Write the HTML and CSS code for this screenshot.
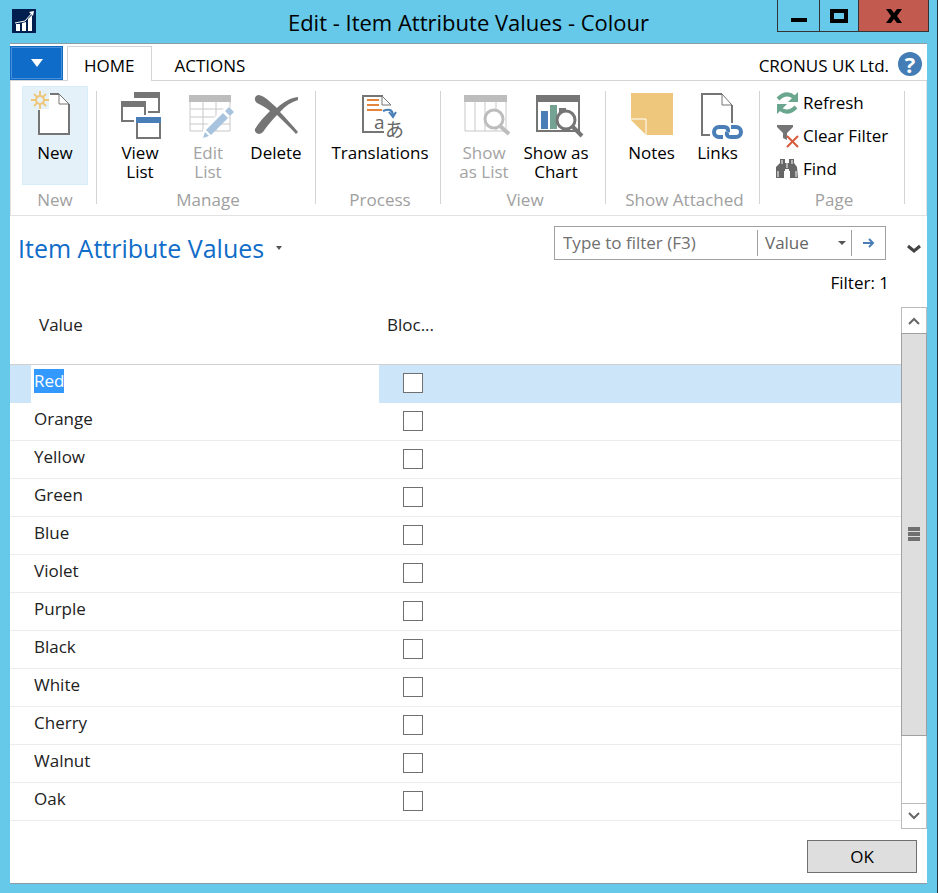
FILE: index.html
```html
<!DOCTYPE html>
<html lang="en">
<head>
<meta charset="utf-8">
<title>Edit - Item Attribute Values - Colour</title>
<link rel="stylesheet" href="styles.css">
</head>
<body>
<div class="window">
  <header class="titlebar">
    <svg class="app-icon" width="24" height="24" viewBox="0 0 24 24"><path fill="#001f4e" d="M0 0h24v24H0z"/><path fill="#fff" d="M4 15h4v7H4zM10 14l4-1v9h-4zM16 10l4-4v16h-4z"/><path d="M3 14l5-1 5-1 7-8" fill="none" stroke="#fff"/><path fill="#fff" d="M17 3l5-1-1 5z"/></svg>
    <h1 class="window-title">Edit - Item Attribute Values - Colour</h1>
    <div class="window-buttons">
      <button class="win-btn" aria-label="Minimize"><svg width="16" height="16"><path d="M0 10h16v4H0z"/></svg></button>
      <button class="win-btn" aria-label="Maximize"><svg width="18" height="14"><path d="M2 2h14v10H2z" fill="none" stroke="#000" stroke-width="4"/></svg></button>
      <button class="win-btn close" aria-label="Close"><svg width="16" height="14" viewBox="0 0 16 14"><path d="M0 0h5l3 4 3-4h5l-5 7 5 7h-5l-3-4-3 4H0l5-7z"/></svg></button>
    </div>
  </header>
  <main class="client">
    <nav class="tabs">
      <button class="app-menu" aria-label="Application menu"><svg width="12" height="8"><path fill="#fff" d="M0 0h12L6 8z"/></svg></button>
      <a class="tab active" href="#home">HOME</a>
      <a class="tab" href="#actions">ACTIONS</a>
      <span class="company">CRONUS UK Ltd.</span>
      <button class="help" aria-label="Help">?</button>
    </nav>
    <div class="ribbon" id="home">
      <section class="group g-new">
        <div class="tools">
          <button class="tool highlighted"><svg width="48" height="48" viewBox="0 0 48 48"><path d="M8 3h20l10 10v30H8z" fill="#fff"/><path d="M0 0h18v18H0z" fill="#e4f1f9"/><path d="M8 19v24h30V13M19 3h9" fill="none" stroke="#757575" stroke-width="2"/><path d="M28 3v10h10M28 3l10 10" fill="none" stroke="#757575"/><path d="M9 0v5M9 13v5M0 9h5M13 9h5M3 3l4 4M11 11l4 4M15 3l-4 4M7 11l-4 4" stroke="#eec77c" stroke-width="2"/><circle cx="9" cy="9" r="4" fill="none" stroke="#eec77c" stroke-width="2"/></svg><span>New</span></button>
        </div>
        <h2>New</h2>
      </section>
      <section class="group g-manage">
        <div class="tools">
          <button class="tool"><svg width="48" height="48" viewBox="0 0 48 48"><g fill="#757575"><path d="M18 1h26v6H18zM42 7h2v15H32v-2h10zM5 10h25v6H5zM5 16h2v13h11v2H5zM28 16h2v8h-2z"/></g><path d="M21 27h23v20H21z" fill="#fff" stroke="#757575" stroke-width="2"/><path fill="#4a7eb6" d="M20 26h25v6H20z"/></svg><span>View<br>List</span></button>
          <button class="tool" disabled><svg width="48" height="48" viewBox="0 0 48 48"><path d="M5 4h42v7H5z" fill="#bdbdbd"/><path d="M6 11v29h40V11M6 18h40M6 26h40M6 33h40M19 11v29M32 11v29" fill="none" stroke="#c8c8c8"/><path d="M17 47l3-10 20-20 8-1v7L27 43z" fill="#fff"/><path d="M19 47l2-6 4 4zM22 39l17-17 5 5-17 17zM41 20l4-4 5 5-4 4z" fill="#a8c3de"/></svg><span>Edit<br>List</span></button>
          <button class="tool"><svg width="48" height="48" viewBox="0 0 48 48"><path d="M7 4c6 1 12 8 18 13C31 11 38 7 46 6v3c-7 2-13 6-18 12 6 6 12 13 18 20l-2 2C38 36 31 30 25 24 20 29 15 35 11 41c-4 4-9 1-8-3C7 31 13 25 18 20 13 16 9 14 5 12 1 9 3 4 7 4z" fill="#757575"/></svg><span>Delete</span></button>
        </div>
        <h2>Manage</h2>
      </section>
      <section class="group g-process">
        <div class="tools">
          <button class="tool"><svg width="48" height="48" viewBox="0 0 48 48"><path d="M28 41H7V5h20" fill="none" stroke="#757575" stroke-width="2"/><path d="M26 5v9h9M26 5l9 9" fill="none" stroke="#757575"/><path d="M11 9h12M11 14h12M11 19h15" stroke="#e5843b" stroke-width="2"/><path d="M27 20q9-4 10 4M33 21l4 5 3-5" fill="none" stroke="#4a7eb6" stroke-width="2"/><text x="18" y="38" class="glyph latin">a</text><text x="29" y="46" class="glyph kana">あ</text></svg><span>Translations</span></button>
        </div>
        <h2>Process</h2>
      </section>
      <section class="group g-view">
        <div class="tools">
          <button class="tool" disabled><svg width="48" height="48" viewBox="0 0 48 48"><path d="M4 4h43v7H4z" fill="#bdbdbd"/><path d="M5 11v29h41V11M15 11v29M25 11v29M36 11v29" fill="none" stroke="#c8c8c8"/><circle cx="34" cy="28" r="9" fill="#fff" stroke="#bdbdbd" stroke-width="3"/><path d="M40 35l9 8" stroke="#bdbdbd" stroke-width="4"/></svg><span>Show<br>as List</span></button>
          <button class="tool"><svg width="48" height="48" viewBox="0 0 48 48"><path d="M4 4h44v7H4z" fill="#757575"/><path d="M5 11v29h42V11" fill="none" stroke="#757575" stroke-width="2"/><path fill="#4a7eb6" d="M9 20h7v18H9z"/><path fill="#74a393" d="M18 14h7v24h-7z"/><path fill="#757575" d="M27 17h7v6h-7z"/><circle cx="34" cy="29" r="9" fill="#fff" stroke="#757575" stroke-width="3"/><path d="M41 36l9 9" stroke="#757575" stroke-width="4"/></svg><span>Show as<br>Chart</span></button>
        </div>
        <h2>View</h2>
      </section>
      <section class="group g-attached">
        <div class="tools">
          <button class="tool"><svg width="48" height="48" viewBox="0 0 48 48"><path d="M3 2h42v42H18L3 29z" fill="#eec77c"/><path d="M3 28h15v16" fill="none" stroke="#fff"/></svg><span>Notes</span></button>
          <button class="tool"><svg width="48" height="48" viewBox="0 0 48 48"><path d="M16 44H8V3h20M38 14v18" fill="none" stroke="#757575" stroke-width="2"/><path d="M28 3v11h10M28 3l10 11" fill="none" stroke="#757575"/><g fill="none" stroke="#4a7eb6" stroke-width="4"><path d="M29 46h-4a5 5 0 0 1 0-10h5q5 0 4 5"/><path d="M37 36h5a5 5 0 0 1 0 10h-5q-5 0-4-5"/></g></svg><span>Links</span></button>
        </div>
        <h2>Show Attached</h2>
      </section>
      <section class="group g-page">
        <div class="list-tools">
          <button class="row-tool"><svg width="24" height="24" viewBox="0 0 24 24"><path d="M3 8q8-8 16-2M21 16q-8 8-16 2" fill="none" stroke="#6ba68e" stroke-width="4"/><path d="M23 1v10H13zM2 23V13h10z" fill="#6ba68e"/></svg>Refresh</button>
          <button class="row-tool"><svg width="24" height="24" viewBox="0 0 24 24"><path d="M2 1h16v2l-6 6v7l-4-2V9L2 3z" fill="#757575"/><path d="M12 12l11 11M23 12L12 23" stroke="#d65a3c" stroke-width="2"/></svg>Clear Filter</button>
          <button class="row-tool"><svg width="24" height="24" viewBox="0 0 24 24"><path d="M5 2h5v4h4V2h5v4l3 4 1 11h-8v-7h-1v-2h-4v2H9v7H1V10l4-4z" fill="#666"/><path d="M7 3v4M17 3v4M3 14v6M21 14v6M12 6v5" stroke="#fff"/></svg>Find</button>
        </div>
        <h2>Page</h2>
      </section>
    </div>
    <div class="page-head">
      <button class="page-title">Item Attribute Values <svg width="6" height="4"><path fill="#555" d="M0 0h6L3 4z"/></svg></button>
      <form class="filter">
        <input type="text" aria-label="Type to filter" placeholder="Type to filter (F3)">
        <div class="column-pick"><select aria-label="Filter column"><option>Value</option></select></div>
        <button type="button" aria-label="Apply filter"><svg width="12" height="10"><path d="M0 5h10M6 1l4 4-4 4" fill="none" stroke="#4a7eb6" stroke-width="2"/></svg></button>
      </form>
      <button class="expand" aria-label="Expand filter"><svg width="16" height="10"><path d="M2 2l6 5 6-5" fill="none" stroke="#444" stroke-width="3"/></svg></button>
    </div>
    <p class="filter-status">Filter: 1</p>
    <div class="list">
      <table>
        <colgroup><col class="c-mark"><col class="c-value"><col class="c-blocked"><col></colgroup>
        <thead><tr><th></th><th class="value-head">Value</th><th class="blocked-head">Bloc...</th><th></th></tr></thead>
        <tbody>
          <tr class="selected"><td></td><td class="value"><span class="sel-text">Red</span></td><td class="check"><input type="checkbox" aria-label="Red blocked"></td><td></td></tr>
          <tr><td></td><td class="value">Orange</td><td class="check"><input type="checkbox" aria-label="Orange blocked"></td><td></td></tr>
          <tr><td></td><td class="value">Yellow</td><td class="check"><input type="checkbox" aria-label="Yellow blocked"></td><td></td></tr>
          <tr><td></td><td class="value">Green</td><td class="check"><input type="checkbox" aria-label="Green blocked"></td><td></td></tr>
          <tr><td></td><td class="value">Blue</td><td class="check"><input type="checkbox" aria-label="Blue blocked"></td><td></td></tr>
          <tr><td></td><td class="value">Violet</td><td class="check"><input type="checkbox" aria-label="Violet blocked"></td><td></td></tr>
          <tr><td></td><td class="value">Purple</td><td class="check"><input type="checkbox" aria-label="Purple blocked"></td><td></td></tr>
          <tr><td></td><td class="value">Black</td><td class="check"><input type="checkbox" aria-label="Black blocked"></td><td></td></tr>
          <tr><td></td><td class="value">White</td><td class="check"><input type="checkbox" aria-label="White blocked"></td><td></td></tr>
          <tr><td></td><td class="value">Cherry</td><td class="check"><input type="checkbox" aria-label="Cherry blocked"></td><td></td></tr>
          <tr><td></td><td class="value">Walnut</td><td class="check"><input type="checkbox" aria-label="Walnut blocked"></td><td></td></tr>
          <tr><td></td><td class="value">Oak</td><td class="check"><input type="checkbox" aria-label="Oak blocked"></td><td></td></tr>
        </tbody>
      </table>
      <div class="scrollbar">
        <button class="arrow up" aria-label="Scroll up"><svg width="12" height="8"><path d="M1 7l5-5 5 5" fill="none" stroke="#666" stroke-width="2"/></svg></button>
        <div class="thumb"><svg width="12" height="14"><path fill="#707070" d="M0 0h12v4H0zM0 5h12v4H0zM0 10h12v4H0z"/></svg></div>
        <div class="track"></div>
        <button class="arrow down" aria-label="Scroll down"><svg width="12" height="8"><path d="M1 1l5 5 5-5" fill="none" stroke="#666" stroke-width="2"/></svg></button>
      </div>
    </div>
    <footer><button class="ok">OK</button></footer>
  </main>
</div>
</body>
</html>
```
FILE: styles.css
```css
* { box-sizing: border-box; }
body {
  margin: 0;
  font: 17px/20px "Open Sans", "Noto Sans", sans-serif;
  color: #000;
}
button, input, select { font: inherit; color: inherit; margin: 0; padding: 0; border: 0; background: none; border-radius: 0; }
svg { display: block; flex: none; overflow: visible; }
h1, h2, p { margin: 0; font-weight: 400; }
.window {
  min-height: 100vh;
  display: flex;
  flex-direction: column;
  padding: 0 10px;
  background: #66c9ea;
  border-right: 1px solid #22343c;
}
.titlebar { display: flex; align-items: flex-start; height: 43px; }
.app-icon { margin: 9px 0 0 2px; }
.window-title { flex: 1; padding-left: 124px; text-align: center; font-size: 22px; line-height: 44px; }
.window-buttons { display: flex; height: 32px; margin-right: -2px; border: 1px solid #333; border-top: 0; }
.win-btn { width: 42px; display: grid; place-items: center; border-right: 1px solid #333; }
.win-btn + .win-btn { width: 39px; }
.window-buttons .close { width: 69px; background: #c25a50; border-right: 0; }
.client {
  flex: 1;
  display: flex;
  flex-direction: column;
  margin-bottom: 9px;
  background: #fff;
  border-top: 1px solid #8a9da6;
  border-bottom: 1px solid #8a9da6;
}
.tabs { display: flex; height: 37px; padding-top: 2px; border-bottom: 1px solid #d5d5d5; }
.app-menu { width: 53px; height: 34px; margin-right: 4px; display: grid; place-items: center; background: #0f6cc8; border: 1px solid #0f6cc8; outline: 1px solid #4a8fd6; outline-offset: -2px; }
.tab { padding: 0 16px; line-height: 38px; color: #000; text-decoration: none; border: 1px solid transparent; border-bottom: 0; }
.tab.active { height: 35px; background: #fff; border-color: #d5d5d5; }
.tab + .tab { padding-left: 22px; }
.company { margin-left: auto; line-height: 40px; }
.help { width: 24px; height: 24px; margin: 6px 5px 0 9px; border-radius: 50%; background: #447cb5; color: #fff; font-size: 22px; font-weight: 700; line-height: 24px; }
.ribbon { display: flex; height: 135px; padding: 5px 0 11px; border: 1px solid #e2e2e2; border-top: 0; }
.group { position: relative; display: flex; flex-direction: column; justify-content: space-between; padding-left: 3px; }
.group::after { content: ""; position: absolute; right: 0; top: 5px; bottom: 0; width: 1px; background: #d3d3d3; }
.group h2 { text-align: center; font-size: 17px; line-height: 20px; color: #a0a0a0; margin-bottom: -6px; }
.g-new { width: 86px; padding: 0 9px 0 11px; }
.g-manage { width: 219px; }
.g-process { width: 125px; }
.g-view { width: 165px; }
.g-attached { width: 154px; }
.g-page { width: 145px; }
.tools { display: flex; justify-content: center; gap: 2px; }
.tool { width: 66px; height: 99px; padding-top: 5px; display: flex; flex-direction: column; align-items: center; line-height: 19px; white-space: nowrap; }
.tool span { padding-top: 4px; }
.tool:disabled { color: #a3a3a3; }
.highlighted { background: #e4f1f9; border: 1px solid #d7edf7; padding-top: 4px; }
.g-view .tools { gap: 6px; margin-right: 10px; }
.g-attached .tools { gap: 0; }
.glyph { fill: #666; }
.latin { font: 19px "Open Sans", sans-serif; }
.kana { font: 19px "Noto Sans CJK JP", sans-serif; }
.list-tools { padding: 5px 0 0 12px; display: grid; gap: 9px; }
.row-tool { display: flex; align-items: center; gap: 4px; height: 24px; white-space: nowrap; }
.page-head { display: flex; padding: 10px 5px 0 8px; }
.page-title { display: flex; align-items: center; gap: 12px; height: 44px; font-size: 25px; color: #0f6cc8; }
.filter { display: flex; align-items: center; width: 332px; height: 34px; margin-left: auto; border: 1px solid #a0a0a0; color: #666; }
.filter input { flex: 1; min-width: 0; padding-left: 8px; outline: 0; }
.filter input::placeholder { color: #707070; opacity: 1; }
.column-pick { position: relative; width: 95px; height: 26px; border-left: 1px solid #a0a0a0; border-right: 1px solid #a0a0a0; }
.column-pick::after { content: ""; position: absolute; right: 5px; top: 11px; border: 4px solid transparent; border-top-color: #555; border-bottom: 0; pointer-events: none; }
.column-pick select { width: 100%; height: 100%; padding-left: 7px; appearance: none; }
.filter button { width: 33px; display: grid; place-items: center; }
.expand { width: 16px; height: 46px; margin-left: 20px; display: grid; place-items: center; }
.filter-status { padding-right: 38px; text-align: right; line-height: 20px; margin: 1px 0 14px; }
.list { display: flex; align-items: flex-start; }
table { flex: 1; table-layout: fixed; border-collapse: collapse; color: #222; }
.c-mark { width: 21px; }
.c-value { width: 348px; }
.c-blocked { width: 76px; }
th { padding: 0; height: 57px; text-align: left; vertical-align: top; font-weight: 400; line-height: 36px; border-bottom: 1px solid #d0d0d0; }
th.value-head, th.blocked-head { padding-left: 8px; }
td { padding: 0; height: 38px; border-bottom: 1px solid #ececec; }
.value { padding: 0 0 4px 3px; }
.check { padding-left: 24px; }
.selected td { background: #cde5f8; border-color: #cde5f8; }
.selected .value { background: #fff; border-color: #fff; }
.sel-text { display: inline-block; height: 24px; line-height: 24px; background: #3399ff; color: #fff; }
input[type="checkbox"] { appearance: none; display: block; width: 20px; height: 20px; border: 1px solid #707070; background: #fff; }
.scrollbar { align-self: stretch; width: 26px; margin-bottom: -8px; display: flex; flex-direction: column; border: 1px solid #bcbcbc; }
.arrow { height: 25px; display: grid; place-items: center; }
.thumb { flex: 1; display: grid; place-items: center; margin: 0 -1px; background: #dedede; border: 1px solid #a0a0a0; }
.track { height: 67px; }
.down { border-top: 1px solid #bcbcbc; }
footer { padding: 10px; display: flex; justify-content: flex-end; margin-top: auto; }
.ok { width: 110px; height: 33px; background: #dedede; border: 1px solid #707070; }
```
